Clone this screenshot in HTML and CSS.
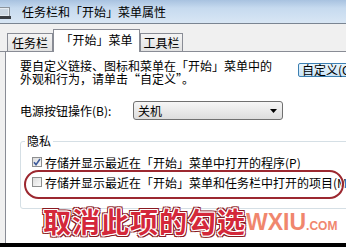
FILE: index.html
```html
<!DOCTYPE html>
<html lang="zh-CN">
<head>
<meta charset="utf-8">
<title>任务栏和「开始」菜单属性</title>
<link rel="stylesheet" href="styles.css">
</head>
<body>
<div class="window">
  <div class="titlebar">
    <svg class="app-icon" width="14" height="14" viewBox="0 0 14 14">
      <rect x="0.5" y="1.5" width="11" height="9" fill="#e6ecf2" stroke="#8c949c"/>
      <rect x="2" y="3" width="8" height="6" fill="#cdd8e3"/>
      <rect x="0" y="10" width="13" height="3" fill="#3b3f44"/>
    </svg>
    <span class="title">任务栏和「开始」菜单属性</span>
  </div>
  <div class="tabstrip">
    <div class="tab tab-1">任务栏</div>
    <div class="tab tab-active">「开始」菜单</div>
    <div class="tab tab-3">工具栏</div>
  </div>
  <div class="panel">
    <div class="intro">
      <div class="intro-text">
        <div class="intro-line">要自定义链接、图标和菜单在「开始」菜单中的</div>
        <div class="intro-line">外观和行为，请单击“自定义”。</div>
      </div>
      <div class="button">自定义(C)</div>
    </div>
    <div class="power-row">
      <span class="power-label">电源按钮操作(B):</span>
      <div class="select">
        <span>关机</span>
        <svg class="arrow" width="7" height="4" viewBox="0 0 7 4"><path d="M0 0H7L3.5 4Z" fill="#000"/></svg>
      </div>
    </div>
    <fieldset class="group">
      <legend>隐私</legend>
      <div class="check-row">
        <span class="checkbox checked">
          <svg width="8" height="8" viewBox="0 0 8 8"><path d="M1 4.2L3 6.6L7 1" fill="none" stroke="#3d5a9a" stroke-width="1.6"/></svg>
        </span>
        <span class="check-label">存储并显示最近在「开始」菜单中打开的程序(P)</span>
      </div>
      <div class="check-row">
        <span class="checkbox"></span>
        <span class="check-label">存储并显示最近在「开始」菜单和任务栏中打开的项目(M)</span>
      </div>
    </fieldset>
  </div>
  <div class="bottom-bar"></div>

  <div class="highlight"></div>
  <div class="annotation">取消此项的勾选</div>
  <div class="watermark">WXIU<span class="wm-small">.COM</span></div>
</div>
</body>
</html>
```
FILE: styles.css
```css
html, body {
  margin: 0;
  padding: 0;
}
body {
  width: 346px;
  height: 247px;
  overflow: hidden;
  background: #f0f0f0;
  font-family: "Noto Sans CJK SC", "Noto Sans", sans-serif;
  font-size: 12px;
  color: #000;
}
.window {
  position: relative;
  width: 346px;
  height: 247px;
  display: flex;
  flex-direction: column;
  overflow: hidden;
}
.titlebar {
  height: 23px;
  flex: none;
  border-bottom: 1px solid #7a8592;
  background: linear-gradient(to bottom, #a8c2e0 0%, #c6daef 35%, #d8e6f4 100%);
  display: flex;
  align-items: center;
}
.app-icon {
  margin-left: -2px;
  margin-top: 2px;
  flex: none;
}
.title {
  margin-left: 10px;
  font-size: 12px;
  line-height: 14px;
  white-space: nowrap;
}
.tabstrip {
  flex: none;
  display: flex;
  align-items: flex-end;
  padding-left: 7px;
  border-bottom: 1px solid #898c95;
  box-sizing: border-box;
  height: 28px;
}
.tab {
  box-sizing: border-box;
  height: 18px;
  border: 1px solid #898c95;
  border-bottom: none;
  background: linear-gradient(to bottom, #f4f4f4, #e2e2e2);
  text-align: center;
  line-height: 17px;
  white-space: nowrap;
  overflow: hidden;
}
.tab-1 { width: 46px; }
.tab-3 { width: 43px; }
.tab-active {
  width: 87px;
  height: 23px;
  margin-bottom: -1px;
  background: #fff;
  line-height: 20px;
  position: relative;
  z-index: 1;
}
.panel {
  flex: 1;
  margin-left: 5px;
  background: #fff;
  border-left: 1px solid #898c95;
  padding-left: 14px;
  min-width: 400px;
}
.intro {
  display: flex;
  margin-top: 8px;
}
.intro-text {
  width: 278px;
  flex: none;
  display: flex;
  flex-direction: column;
  gap: 1px;
}
.intro-line {
  line-height: 12px;
  height: 12px;
  white-space: nowrap;
}
.button {
  flex: none;
  margin-top: 3px;
  height: 14px;
  box-sizing: border-box;
  padding: 0 3px;
  border: 1px solid #3c7fb1;
  border-radius: 2px;
  background: linear-gradient(to bottom, #eaf6fd, #c8e3f7);
  line-height: 12px;
  white-space: nowrap;
}
.power-row {
  display: flex;
  align-items: center;
  margin-top: 16px;
  height: 19px;
}
.power-label {
  width: 113px;
  flex: none;
  white-space: nowrap;
}
.select {
  width: 150px;
  height: 19px;
  box-sizing: border-box;
  border: 1px solid #707070;
  border-radius: 3px;
  background: linear-gradient(to bottom, #f6f6f6, #dddddd);
  display: flex;
  align-items: center;
  padding-left: 4px;
  padding-right: 5px;
}
.select span {
  flex: 1;
}
.group {
  margin: 14px 0 0 0;
  width: 340px;
  box-sizing: border-box;
  padding: 4px 0 16px 11px;
  border: 1px solid #d5dfe5;
  border-radius: 3px;
}
.group legend {
  padding: 0 2px;
  margin-left: -7px;
  line-height: 14px;
}
.check-row {
  display: flex;
  align-items: center;
  height: 20px;
  white-space: nowrap;
}
.checkbox {
  width: 10px;
  height: 10px;
  box-sizing: border-box;
  border: 1px solid #8e8f8f;
  background: linear-gradient(135deg, #dcdcdc, #fbfbfb);
  display: flex;
  align-items: center;
  justify-content: center;
  flex: none;
}
.check-label {
  margin-left: 3px;
}
.bottom-bar {
  height: 4px;
  flex: none;
  background: #000;
}
.highlight {
  position: absolute;
  left: 24px;
  top: 170px;
  width: 320px;
  height: 29px;
  box-sizing: border-box;
  border: 2px solid #9c2830;
  border-radius: 15px;
  box-shadow: 0 0 0 1px rgba(255,255,255,0.85), inset 0 0 0 1px rgba(255,255,255,0.85);
}
.annotation {
  position: absolute;
  left: 43px;
  top: 203px;
  font-size: 28px;
  font-weight: 700;
  letter-spacing: 1px;
  line-height: 36px;
  color: #d4283a;
  white-space: nowrap;
  text-shadow:
    1px 0 0 #fff, -1px 0 0 #fff, 0 1px 0 #fff, 0 -1px 0 #fff,
    1px 1px 0 #fff, -1px -1px 0 #fff, 1px -1px 0 #fff, -1px 1px 0 #fff,
    2px 0 0 #8a1a22, -2px 0 0 #8a1a22, 0 2px 0 #8a1a22, 0 -2px 0 #8a1a22,
    2px 2px 0 #8a1a22, -2px -2px 0 #8a1a22, 2px -2px 0 #8a1a22, -2px 2px 0 #8a1a22;
}
.watermark {
  position: absolute;
  left: 246px;
  top: 209px;
  font-family: "Liberation Sans", Arial, sans-serif;
  font-weight: 700;
  font-size: 23px;
  line-height: 26px;
  color: #ef7a5e;
  opacity: 0.9;
  white-space: nowrap;
}
.wm-small {
  font-size: 12px;
}
```
